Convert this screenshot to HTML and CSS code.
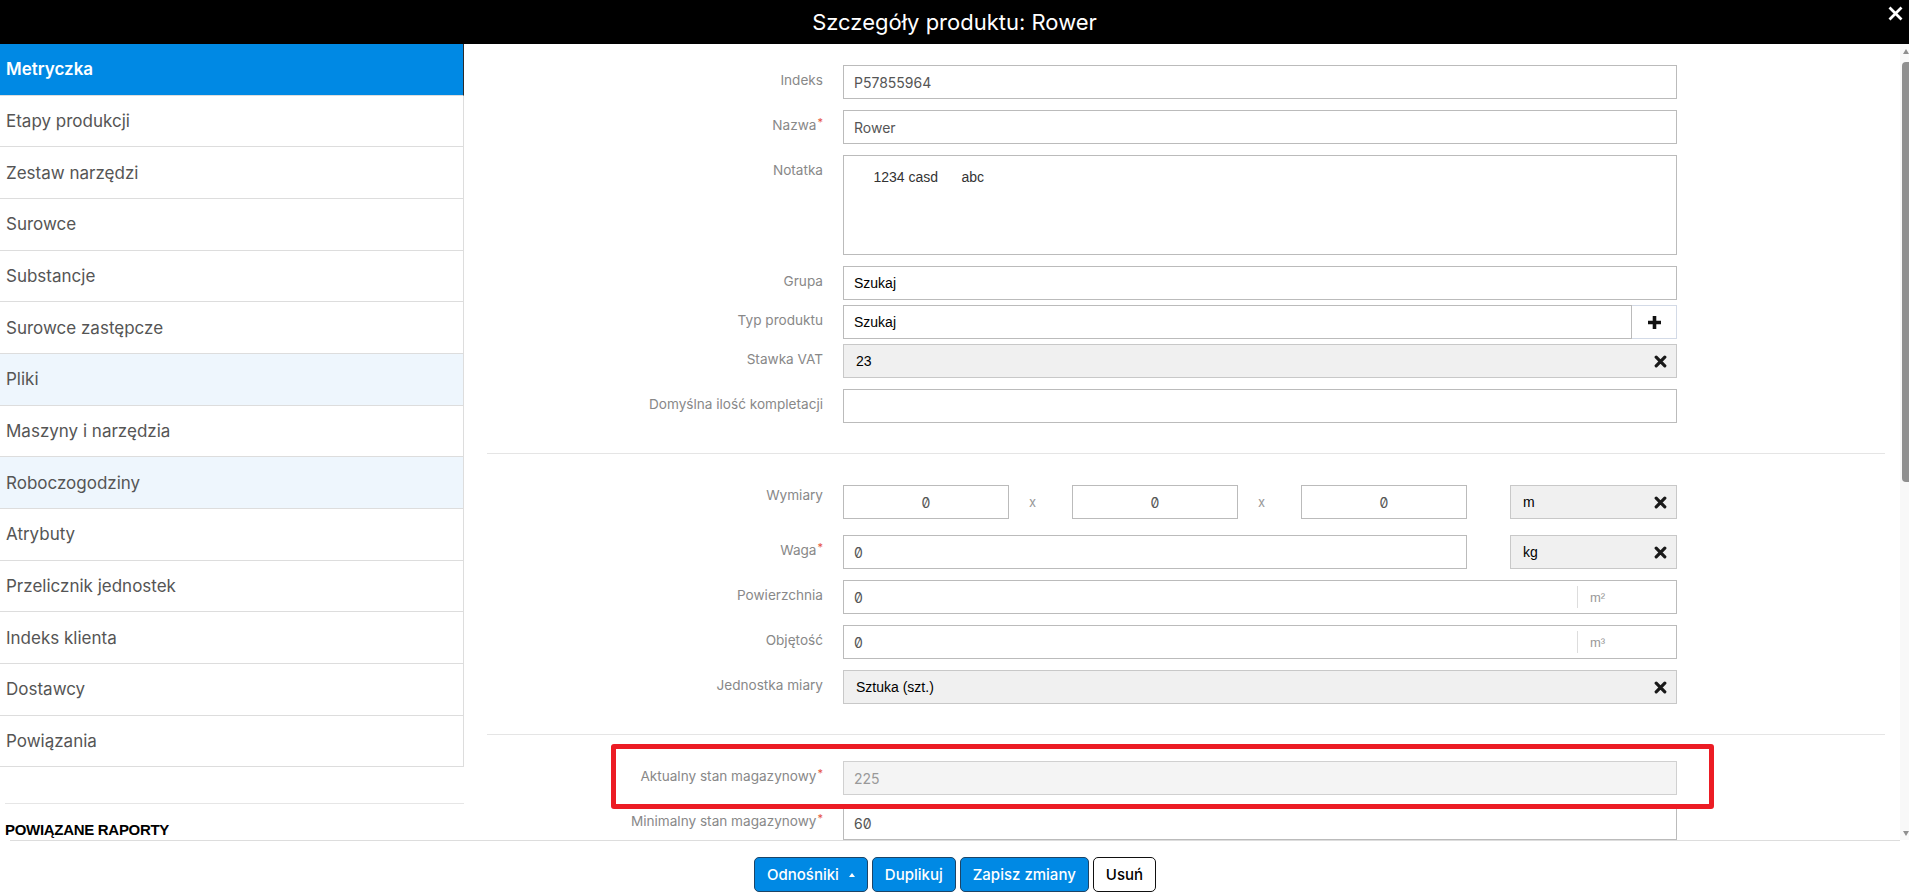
FILE: index.html
```html
<!DOCTYPE html>
<html lang="pl">
<head>
    <meta charset="UTF-8">
    <meta name="viewport" content="width=device-width, initial-scale=1.0">
    <title>Szczegóły produktu: Rower</title>
    <link rel="stylesheet" href="styles.css">
</head>
<body>
    <div class="modal">
        <div class="modalHeader">
            <h1>Szczegóły produktu: Rower</h1>
            <button class="btnClose" type="button" aria-label="Zamknij">
                <svg width="15" height="15" viewBox="0 0 15 15"><path d="M1.5 1.5L13.5 13.5M13.5 1.5L1.5 13.5" stroke="#fff" stroke-width="2.8"/></svg>
            </button>
        </div>

        <div class="modalBody">
            <div class="sideMenu">
                <ul class="tabs">
                    <li class="active">Metryczka</li>
                    <li>Etapy produkcji</li>
                    <li>Zestaw narzędzi</li>
                    <li>Surowce</li>
                    <li>Substancje</li>
                    <li>Surowce zastępcze</li>
                    <li class="tinted">Pliki</li>
                    <li>Maszyny i narzędzia</li>
                    <li class="tinted">Roboczogodziny</li>
                    <li>Atrybuty</li>
                    <li>Przelicznik jednostek</li>
                    <li>Indeks klienta</li>
                    <li>Dostawcy</li>
                    <li>Powiązania</li>
                </ul>
                <div class="reports">
                    <h3>POWIĄZANE RAPORTY</h3>
                </div>
            </div>

            <div class="formArea">
                <div class="formContent">
                    <div class="formSection first">
                        <div class="formRow">
                            <label>Indeks</label>
                            <input class="textInput" type="text" value="P57855964">
                        </div>
                        <div class="formRow">
                            <label>Nazwa<sup class="req">*</sup></label>
                            <input class="textInput" type="text" value="Rower">
                        </div>
                        <div class="formRow">
                            <label>Notatka</label>
                            <textarea class="noteInput">     1234 casd      abc</textarea>
                        </div>
                        <div class="formRow tight">
                            <label>Grupa</label>
                            <input class="textInput searchInput" type="text" placeholder="Szukaj">
                        </div>
                        <div class="formRow tight">
                            <label>Typ produktu</label>
                            <div class="inputGroup">
                                <input class="textInput searchInput" type="text" placeholder="Szukaj">
                                <button class="btnAddon" type="button" aria-label="Dodaj">
                                    <svg width="15" height="15" viewBox="0 0 15 15"><path d="M7.5 1V14M1 7.5H14" stroke="#111" stroke-width="3.6"/></svg>
                                </button>
                            </div>
                        </div>
                        <div class="formRow">
                            <label>Stawka VAT</label>
                            <div class="selectBox">
                                <span>23</span>
                                <svg class="clearIcon" width="13" height="13" viewBox="0 0 13 13"><path d="M2.2 2.2L10.8 10.8M10.8 2.2L2.2 10.8" stroke="#1a1a1a" stroke-width="3.2" stroke-linecap="round"/></svg>
                            </div>
                        </div>
                        <div class="formRow">
                            <label>Domyślna ilość kompletacji</label>
                            <input class="textInput" type="text" value="">
                        </div>
                    </div>

                    <div class="formSection">
                        <div class="formRow dims">
                            <label>Wymiary</label>
                            <div class="inputGroup">
                                <input class="textInput centered" type="text" value="0">
                                <span class="times">x</span>
                                <input class="textInput centered" type="text" value="0">
                                <span class="times">x</span>
                                <input class="textInput centered" type="text" value="0">
                                <div class="selectBox unitSelect">
                                    <span>m</span>
                                    <svg class="clearIcon" width="13" height="13" viewBox="0 0 13 13"><path d="M2.2 2.2L10.8 10.8M10.8 2.2L2.2 10.8" stroke="#1a1a1a" stroke-width="3.2" stroke-linecap="round"/></svg>
                                </div>
                            </div>
                        </div>
                        <div class="formRow">
                            <label>Waga<sup class="req">*</sup></label>
                            <div class="inputGroup">
                                <input class="textInput" type="text" value="0">
                                <div class="selectBox unitSelect">
                                    <span>kg</span>
                                    <svg class="clearIcon" width="13" height="13" viewBox="0 0 13 13"><path d="M2.2 2.2L10.8 10.8M10.8 2.2L2.2 10.8" stroke="#1a1a1a" stroke-width="3.2" stroke-linecap="round"/></svg>
                                </div>
                            </div>
                        </div>
                        <div class="formRow">
                            <label>Powierzchnia</label>
                            <div class="unitField">
                                <input type="text" value="0">
                                <span class="unit">m²</span>
                            </div>
                        </div>
                        <div class="formRow">
                            <label>Objętość</label>
                            <div class="unitField">
                                <input type="text" value="0">
                                <span class="unit">m³</span>
                            </div>
                        </div>
                        <div class="formRow">
                            <label>Jednostka miary</label>
                            <div class="selectBox">
                                <span>Sztuka (szt.)</span>
                                <svg class="clearIcon" width="13" height="13" viewBox="0 0 13 13"><path d="M2.2 2.2L10.8 10.8M10.8 2.2L2.2 10.8" stroke="#1a1a1a" stroke-width="3.2" stroke-linecap="round"/></svg>
                            </div>
                        </div>
                    </div>

                    <div class="formSection stock">
                        <div class="formRow highlight">
                            <label>Aktualny stan magazynowy<sup class="req">*</sup></label>
                            <input class="textInput" type="text" value="225" disabled>
                        </div>
                        <div class="formRow">
                            <label>Minimalny stan magazynowy<sup class="req">*</sup></label>
                            <input class="textInput" type="text" value="60">
                        </div>
                    </div>
                </div>
            </div>

            <div class="scrollTrack">
                <span class="arrow up"></span>
                <span class="thumb"></span>
                <span class="arrow down"></span>
            </div>
        </div>

        <div class="modalFooter">
            <button class="btn" type="button">Odnośniki <span class="caret"></span></button>
            <button class="btn" type="button">Duplikuj</button>
            <button class="btn" type="button">Zapisz zmiany</button>
            <button class="btn btnLight" type="button">Usuń</button>
        </div>
    </div>
</body>
</html>
```

FILE: styles.css
```css
*, *::before, *::after
{
    box-sizing: border-box;
}
body
{
    margin: 0px;
    font-family: Inter, "Noto Sans", sans-serif;
    color: #555;
    background: #fff;
}
input, textarea, button
{
    font: inherit;
}
.modal
{
    height: 100vh;
    display: flex;
    flex-direction: column;
}

/* header */
.modalHeader
{
    position: relative;
    height: 44px;
    flex-shrink: 0;
    background: #000;
    display: flex;
    align-items: center;
    justify-content: center;
}
.modalHeader h1
{
    margin: 0px;
    font-size: 22px;
    font-weight: 400;
    color: #fff;
}
.btnClose
{
    position: absolute;
    top: 6px;
    right: 6px;
    width: 15px;
    height: 15px;
    padding: 0px;
    border: 0px;
    background: none;
    cursor: pointer;
}
.btnClose svg
{
    display: block;
}

/* body */
.modalBody
{
    flex: 1;
    min-height: 0;
    display: flex;
}
.sideMenu
{
    width: 464px;
    flex-shrink: 0;
    overflow: hidden;
}
.tabs
{
    list-style: none;
    margin: 0px;
    padding: 0px;
}
.tabs li
{
    height: 51.67px;
    display: flex;
    align-items: center;
    padding-left: 6px;
    font-size: 17px;
    color: #555;
    border-bottom: 1px solid #ddd;
    border-right: 1px solid #ddd;
    cursor: pointer;
}
.tabs li.active
{
    background: #0089e4;
    color: #fff;
    font-weight: 600;
    border-right-color: #2b2b2b;
}
.tabs li.tinted
{
    background: #eef6fd;
}
.reports
{
    margin: 36px 0px 0px 5px;
    border-top: 1px solid #e6e6e6;
    padding-top: 17px;
}
.reports h3
{
    margin: 0px;
    font-family: "Liberation Sans", Arial, sans-serif;
    font-size: 15px;
    line-height: 18px;
    letter-spacing: -0.3px;
    font-weight: 700;
    color: #000;
}

/* form */
.formArea
{
    flex: 1;
    overflow: hidden;
}
.formContent
{
    padding: 0px 15px 0px 23px;
}
.formSection
{
    padding: 31px 0px 30px;
    border-bottom: 1px solid #e5e5e5;
}
.formSection.first
{
    padding-top: 21px;
}
.formSection.stock
{
    padding-top: 26px;
    border-bottom: 0px;
}
.formRow
{
    position: relative;
    display: grid;
    grid-template-columns: 336px 834px;
    column-gap: 20px;
    margin-bottom: 11px;
}
.formRow.tight
{
    margin-bottom: 5px;
}
.formRow.dims
{
    margin-bottom: 16px;
}
.formRow:last-child
{
    margin-bottom: 0px;
}
.formRow > label
{
    text-align: right;
    padding-top: 7px;
    font-size: 13.6px;
    line-height: 16px;
    color: #888;
}
.formRow.dims > label
{
    padding-top: 2px;
}
.req
{
    color: #e5533d;
    font-size: 11px;
    line-height: 0;
    margin-left: 1px;
    vertical-align: 4px;
}
.formRow.highlight::after
{
    content: "";
    position: absolute;
    left: 124px;
    top: -17px;
    width: 1103px;
    height: 65px;
    border: 5px solid #ec1c24;
    border-radius: 3px;
    z-index: 2;
    pointer-events: none;
}

.textInput
{
    display: block;
    width: 100%;
    height: 34px;
    padding: 0px 10px;
    border: 1px solid #bbb;
    background: #fff;
    font-size: 14px;
    color: #555;
    font-feature-settings: "zero";
    outline: 0px;
}
.textInput:disabled
{
    background: #f4f4f4;
    border-color: #d0d0d0;
    color: #999;
}
.textInput.centered
{
    text-align: center;
}
.searchInput
{
    font-family: "Liberation Sans", Arial, sans-serif;
}
.searchInput::placeholder
{
    color: #000;
    opacity: 1;
}
.noteInput
{
    display: block;
    width: 100%;
    height: 100px;
    padding: 13px 10px;
    border: 1px solid #bbb;
    font-family: "Liberation Sans", Arial, sans-serif;
    font-size: 14px;
    line-height: 16px;
    color: #333;
    resize: none;
    outline: 0px;
}
.inputGroup
{
    display: flex;
    align-items: center;
}
.inputGroup .textInput
{
    flex: 1;
    min-width: 0;
}
.btnAddon
{
    width: 45px;
    height: 34px;
    flex-shrink: 0;
    display: flex;
    align-items: center;
    justify-content: center;
    padding: 0px 0px 0px 1px;
    border: 1px solid #d3dae6;
    border-left: 0px;
    background: #fff;
    cursor: pointer;
}
.times
{
    width: 63px;
    flex-shrink: 0;
    padding-left: 20px;
    font-size: 13px;
    color: #999;
}
.selectBox
{
    display: flex;
    align-items: center;
    justify-content: space-between;
    height: 34px;
    padding: 0px 9px 0px 12px;
    border: 1px solid #c8c8c8;
    background: #f0f0f0;
    font-family: "Liberation Sans", Arial, sans-serif;
    font-size: 14px;
    color: #000;
}
.unitSelect
{
    width: 167px;
    flex-shrink: 0;
    margin-left: 43px;
}
.clearIcon
{
    display: block;
}
.unitField
{
    display: flex;
    height: 34px;
    border: 1px solid #bbb;
}
.unitField input
{
    flex: 1;
    min-width: 0;
    border: 0px;
    padding: 0px 10px;
    font-size: 14px;
    color: #555;
    font-feature-settings: "zero";
    outline: 0px;
}
.unit
{
    width: 99px;
    margin: 5px 0px;
    padding-left: 12px;
    border-left: 1px solid #ddd;
    display: flex;
    align-items: center;
    font-family: "Liberation Sans", Arial, sans-serif;
    font-size: 13px;
    color: #999;
}

/* scrollbar of the form panel */
.scrollTrack
{
    width: 9px;
    flex-shrink: 0;
    display: flex;
    flex-direction: column;
    align-items: flex-end;
    background: #f8f8f8;
}
.arrow
{
    width: 7px;
    height: 14px;
    display: flex;
    align-items: center;
    justify-content: center;
}
.arrow::before
{
    content: "";
    border-left: 3.5px solid transparent;
    border-right: 3.5px solid transparent;
}
.arrow.up::before
{
    border-bottom: 5px solid #8f8f8f;
}
.arrow.down
{
    margin-top: auto;
}
.arrow.down::before
{
    border-top: 5px solid #8f8f8f;
}
.thumb
{
    width: 7px;
    height: 420px;
    margin-top: 4px;
    background: #8f8f8f;
    border-radius: 4px 0px 0px 4px;
}

/* footer */
.modalFooter
{
    height: 54px;
    flex-shrink: 0;
    margin: 0px 9px 0px 10px;
    padding-top: 16px;
    border-top: 1px solid #ddd;
    display: flex;
    justify-content: center;
    align-items: flex-start;
    gap: 4px;
}
.btn
{
    height: 35px;
    padding: 0px 12px;
    border: 1px solid #1d4466;
    border-radius: 5px;
    background: #0089e4;
    color: #fff;
    font-size: 15px;
    font-weight: 500;
    cursor: pointer;
}
.btnLight
{
    background: #fff;
    color: #000;
    border-color: #111;
    padding: 0px 12px;
}
.caret
{
    display: inline-block;
    margin-left: 6px;
    vertical-align: 3px;
    border-left: 3.5px solid transparent;
    border-right: 3.5px solid transparent;
    border-bottom: 4px solid #fff;
}
```
